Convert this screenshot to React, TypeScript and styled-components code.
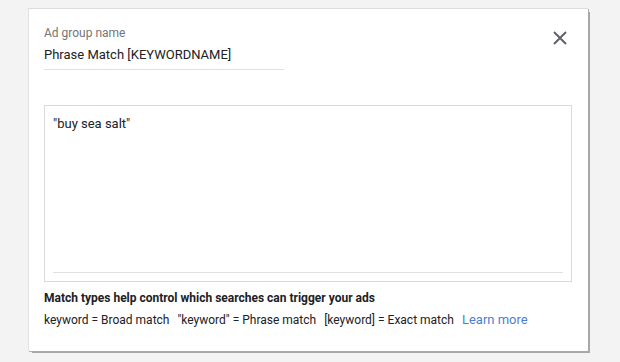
import styled, { createGlobalStyle } from 'styled-components'

const Global = createGlobalStyle`
  html, body {
    margin: 0;
    background: #f3f3f3;
    font-family: Roboto, "Liberation Sans", Arial, sans-serif;
  }
`

const Page = styled.div`
  padding: 8px 0 0 28px;
  height: 362px;
  box-sizing: border-box;
`

const Card = styled.div`
  position: relative;
  width: 560px;
  height: 343px;
  box-sizing: border-box;
  background: #fff;
  border-top: 1px solid #dcdcdc;
  border-left: 1px solid #e2e2e2;
  box-shadow: 3px 3px 0 -1px #a8a8a8, 1px 1px 0 0 #b0b0b0;
  padding: 0 16px 0 15px;
`

const Header = styled.div`
  display: flex;
  justify-content: space-between;
  align-items: flex-start;
  padding-top: 16px;
`

const NameField = styled.div`
  width: 240px;
  border-bottom: 1px solid #e0e0e0;
  padding-bottom: 5px;
`

const Label = styled.div`
  font-size: 12px;
  line-height: 16px;
  color: #757575;
`

const Value = styled.div`
  font-size: 13px;
  line-height: 18px;
  margin-top: 5px;
  color: #202124;
`

const Close = styled.button`
  border: 0;
  background: none;
  padding: 0;
  margin: 5px 4px 0 0;
  width: 16px;
  height: 16px;
  cursor: pointer;
  display: flex;
  align-items: center;
  justify-content: center;
`

const KeywordBox = styled.div`
  margin-top: 35px;
  height: 177px;
  box-sizing: border-box;
  border: 1px solid #dadada;
  padding: 0 8px 8px;
  display: flex;
  flex-direction: column;
`

const KeywordText = styled.div`
  flex: 1;
  font-size: 13px;
  line-height: 18px;
  padding-top: 9px;
  color: #202124;
`

const BoxRule = styled.div`
  border-bottom: 1px solid #e0e0e0;
`

const Hint = styled.div`
  margin-top: 8px;
  font-size: 12px;
  line-height: 16px;
  font-weight: 700;
  color: #202124;
`

const Types = styled.div`
  margin-top: 6px;
  display: flex;
  align-items: baseline;
  gap: 8px;
  font-size: 12px;
  line-height: 16px;
  color: #202124;
`

const Learn = styled.a`
  color: #4a7fd0;
  font-size: 13px;
  text-decoration: none;
`

export default function App() {
  return (
    <Page>
      <Global />
      <Card>
        <Header>
          <NameField>
            <Label>Ad group name</Label>
            <Value>Phrase Match [KEYWORDNAME]</Value>
          </NameField>
          <Close aria-label="Close">
            <svg width="14" height="14" viewBox="0 0 14 14">
              <path d="M1 1 L13 13 M13 1 L1 13" stroke="#5f6368" strokeWidth="2" fill="none" />
            </svg>
          </Close>
        </Header>
        <KeywordBox>
          <KeywordText>"buy sea salt"</KeywordText>
          <BoxRule />
        </KeywordBox>
        <Hint>Match types help control which searches can trigger your ads</Hint>
        <Types>
          <span>keyword = Broad match</span>
          <span>"keyword" = Phrase match</span>
          <span>[keyword] = Exact match</span>
          <Learn href="#">Learn more</Learn>
        </Types>
      </Card>
    </Page>
  )
}
